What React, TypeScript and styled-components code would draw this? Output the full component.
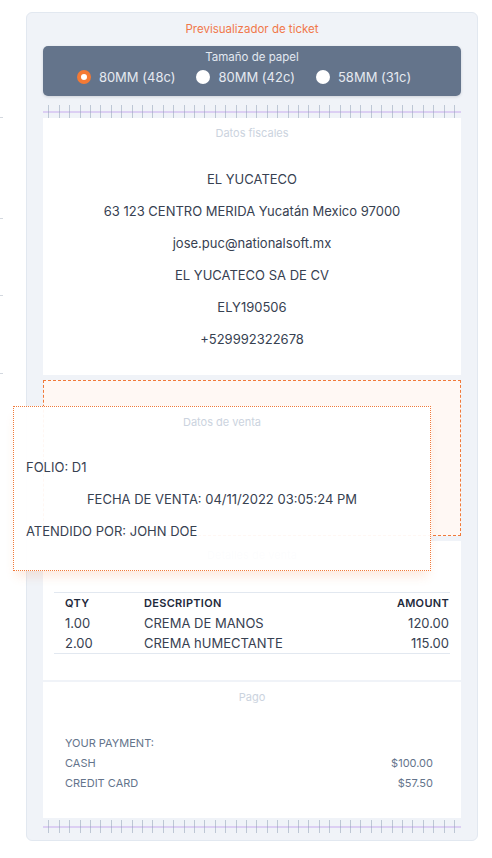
import styled, { createGlobalStyle } from "styled-components";

const GlobalStyle = createGlobalStyle`
  body {
    margin: 0;
    background: #ffffff;
    font-family: Inter, "Noto Sans", sans-serif;
  }
`;

const Page = styled.div`
  display: flex;
  align-items: flex-start;
`;

const Gutter = styled.div`
  width: 26px;
  display: flex;
  flex-direction: column;
  align-items: flex-start;
`;

const Mark = styled.div<{ $gap: number }>`
  width: 3px;
  height: 1px;
  margin-top: ${(p) => p.$gap}px;
  background: #d3d8df;
`;

const Panel = styled.div`
  position: relative;
  width: 452px;
  box-sizing: border-box;
  margin-top: 12px;
  padding: 8px 16px 7px;
  border: 1px solid #e2e8f0;
  border-radius: 6px;
  background: #f0f3f8;
`;

const Title = styled.div`
  text-align: center;
  font-size: 11.5px;
  line-height: 16px;
  color: #f0784a;
`;

const PaperBox = styled.div`
  margin-top: 9px;
  padding: 4px 0 9px;
  border-radius: 5px;
  background: #64748b;
  box-shadow: 0 1px 3px rgba(15, 23, 42, 0.15);
`;

const PaperLabel = styled.div`
  text-align: center;
  font-size: 11.5px;
  line-height: 14px;
  color: #e2e8f0;
`;

const RadioRow = styled.div`
  margin-top: 3px;
  display: flex;
  justify-content: center;
  gap: 5px;
`;

const RadioItem = styled.label`
  display: flex;
  align-items: center;
  gap: 8px;
  margin-right: 16px;
  font-size: 13px;
  line-height: 20px;
  color: #e5e9f0;
`;

const RadioDot = styled.span<{ $checked?: boolean }>`
  width: 14px;
  height: 14px;
  box-sizing: border-box;
  border-radius: 50%;
  background: #ffffff;
  border: ${(p) => (p.$checked ? "4.5px solid #f47a35" : "none")};
`;

const Edge = styled.div<{ $mt: number }>`
  margin-top: ${(p) => p.$mt}px;
  height: 13px;
  background:
    repeating-linear-gradient(
      90deg,
      transparent 0 5.5px,
      rgba(148, 163, 184, 0.55) 5.5px 6.5px,
      transparent 6.5px 10.4px
    ),
    linear-gradient(#dccff3, #dccff3) 0 6px / 100% 2px no-repeat;
`;

const Section = styled.div<{ $mt?: number }>`
  margin-top: ${(p) => p.$mt ?? 0}px;
  background: #ffffff;
`;

const SectionLabel = styled.div<{ $pt: number }>`
  padding-top: ${(p) => p.$pt}px;
  text-align: center;
  font-size: 11px;
  line-height: 14px;
  color: #cbd3de;
`;

const FiscalLines = styled.div`
  padding: 31px 0 28px;
  display: flex;
  flex-direction: column;
  gap: 16px;
  text-align: center;
  font-size: 13px;
  line-height: 16px;
  color: #374151;
`;

const Placeholder = styled.div`
  margin-top: 5px;
  height: 156px;
  box-sizing: border-box;
  border: 1px dashed #f07a3a;
  background: #fff8f4;
`;

const DetailTable = styled.div`
  margin: 30px 11px 0;
  border-top: 1px solid #e2e8f0;
  border-bottom: 1px solid #e2e8f0;
  display: grid;
  grid-template-columns: 90px 1fr auto;
`;

const Cell = styled.div<{ $head?: boolean; $right?: boolean; $first?: boolean }>`
  padding-left: ${(p) => (p.$first ? 11 : 0)}px;
  padding-right: ${(p) => (p.$right ? 1 : 0)}px;
  text-align: ${(p) => (p.$right ? "right" : "left")};
  font-size: ${(p) => (p.$head ? 11 : 13)}px;
  font-weight: ${(p) => (p.$head ? 600 : 400)};
  letter-spacing: ${(p) => (p.$head ? 0.3 : 0)}px;
  line-height: 20px;
  color: ${(p) => (p.$head ? "#1e293b" : "#374151")};
`;

const DetailBody = styled.div`
  padding-bottom: 26px;
`;

const PaymentList = styled.div`
  padding: 29px 28px 25px 22px;
  font-size: 11px;
  line-height: 20px;
  color: #64748b;
`;

const PaymentRow = styled.div`
  display: flex;
  justify-content: space-between;
`;

const DragOverlay = styled.div`
  position: absolute;
  left: -14px;
  top: 393px;
  width: 418px;
  height: 165px;
  box-sizing: border-box;
  border: 1px dotted #f07a3a;
  background: rgba(255, 255, 255, 0.94);
  box-shadow: 0 8px 10px -3px rgba(240, 122, 58, 0.16);
`;

const OverlayLines = styled.div`
  padding: 30px 12px 0;
  display: flex;
  flex-direction: column;
  gap: 16px;
  font-size: 13px;
  line-height: 16px;
  color: #374151;
`;

const OverlayLine = styled.div<{ $center?: boolean }>`
  text-align: ${(p) => (p.$center ? "center" : "left")};
`;

const sizes = [
  { label: "80MM (48c)", checked: true },
  { label: "80MM (42c)", checked: false },
  { label: "58MM (31c)", checked: false },
];

const fiscal = [
  "EL YUCATECO",
  "63 123 CENTRO MERIDA Yucatán Mexico 97000",
  "jose.puc@nationalsoft.mx",
  "EL YUCATECO SA DE CV",
  "ELY190506",
  "+529992322678",
];

const items = [
  { qty: "1.00", desc: "CREMA DE MANOS", amount: "120.00" },
  { qty: "2.00", desc: "CREMA hUMECTANTE", amount: "115.00" },
];

const payments = [
  { name: "CASH", amount: "$100.00" },
  { name: "CREDIT CARD", amount: "$57.50" },
];

export default function App() {
  return (
    <Page>
      <GlobalStyle />
      <Gutter>
        <Mark $gap={117} />
        <Mark $gap={100} />
        <Mark $gap={76} />
        <Mark $gap={77} />
      </Gutter>
      <Panel>
        <Title>Previsualizador de ticket</Title>
        <PaperBox>
          <PaperLabel>Tamaño de papel</PaperLabel>
          <RadioRow>
            {sizes.map((s) => (
              <RadioItem key={s.label}>
                <RadioDot $checked={s.checked} />
                {s.label}
              </RadioItem>
            ))}
          </RadioRow>
        </PaperBox>

        <Edge $mt={9} />
        <Section>
          <SectionLabel $pt={8}>Datos fiscales</SectionLabel>
          <FiscalLines>
            {fiscal.map((line) => (
              <div key={line}>{line}</div>
            ))}
          </FiscalLines>
        </Section>

        <Placeholder />

        <Section $mt={5}>
          <SectionLabel $pt={7}>Detalles de venta</SectionLabel>
          <DetailBody>
            <DetailTable>
              <Cell $head $first>QTY</Cell>
              <Cell $head>DESCRIPTION</Cell>
              <Cell $head $right>AMOUNT</Cell>
              {items.flatMap((it) => [
                <Cell key={it.desc + "q"} $first>{it.qty}</Cell>,
                <Cell key={it.desc + "d"}>{it.desc}</Cell>,
                <Cell key={it.desc + "a"} $right>{it.amount}</Cell>,
              ])}
            </DetailTable>
          </DetailBody>
        </Section>

        <Section $mt={2}>
          <SectionLabel $pt={8}>Pago</SectionLabel>
          <PaymentList>
            <div>YOUR PAYMENT:</div>
            {payments.map((p) => (
              <PaymentRow key={p.name}>
                <span>{p.name}</span>
                <span>{p.amount}</span>
              </PaymentRow>
            ))}
          </PaymentList>
        </Section>
        <Edge $mt={2} />

        <DragOverlay>
          <SectionLabel $pt={8}>Datos de venta</SectionLabel>
          <OverlayLines>
            <OverlayLine>FOLIO: D1</OverlayLine>
            <OverlayLine $center>FECHA DE VENTA: 04/11/2022 03:05:24 PM</OverlayLine>
            <OverlayLine>ATENDIDO POR: JOHN DOE</OverlayLine>
          </OverlayLines>
        </DragOverlay>
      </Panel>
    </Page>
  );
}
